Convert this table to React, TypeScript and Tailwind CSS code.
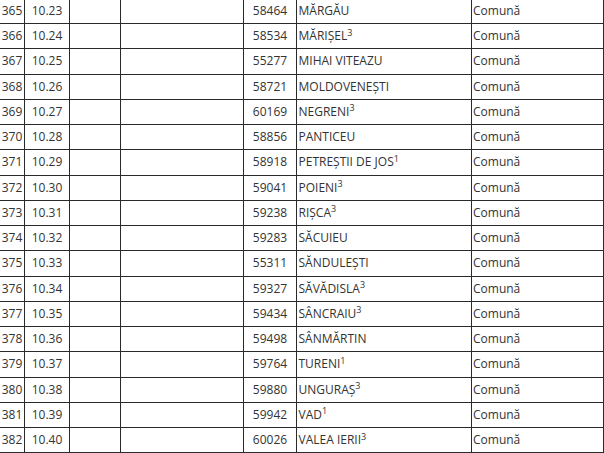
import React from "react";

type Row = [number, string, string, string, string?];

const rows: Row[] = [
  [365, "10.23", "58464", "MĂRGĂU"],
  [366, "10.24", "58534", "MĂRIȘEL", "3"],
  [367, "10.25", "55277", "MIHAI VITEAZU"],
  [368, "10.26", "58721", "MOLDOVENEȘTI"],
  [369, "10.27", "60169", "NEGRENI", "3"],
  [370, "10.28", "58856", "PANTICEU"],
  [371, "10.29", "58918", "PETREȘTII DE JOS", "1"],
  [372, "10.30", "59041", "POIENI", "3"],
  [373, "10.31", "59238", "RIȘCA", "3"],
  [374, "10.32", "59283", "SĂCUIEU"],
  [375, "10.33", "55311", "SĂNDULEȘTI"],
  [376, "10.34", "59327", "SĂVĂDISLA", "3"],
  [377, "10.35", "59434", "SÂNCRAIU", "3"],
  [378, "10.36", "59498", "SÂNMĂRTIN"],
  [379, "10.37", "59764", "TURENI", "1"],
  [380, "10.38", "59880", "UNGURAȘ", "3"],
  [381, "10.39", "59942", "VAD", "1"],
  [382, "10.40", "60026", "VALEA IERII", "3"],
];

const cell = "border-r border-b border-[#2a2a2a] flex items-center h-full";

export default function App() {
  return (
    <div
      className="w-[604px] h-[453px] overflow-hidden bg-white text-[#333333] text-[12px]"
      style={{ fontFamily: '"Open Sans", "Noto Sans", sans-serif' }}
    >
      <div className="mt-[-1.25px]">
        {rows.map(([n, sec, code, name, sup]) => (
          <div
            key={n}
            className="grid grid-cols-[25px_45px_51px_123px_53px_175px_132px] h-[25.25px]"
          >
            <div className={`${cell} justify-center`}>{n}</div>
            <div className={`${cell} justify-center`}>{sec}</div>
            <div className={cell}></div>
            <div className={cell}></div>
            <div className={`${cell} justify-center`}>{code}</div>
            <div className={`${cell} pl-[1.5px]`}>
              <span>
                {name}
                {sup && <sup>{sup}</sup>}
              </span>
            </div>
            <div className={`${cell} pl-[1px]`}>Comună</div>
          </div>
        ))}
      </div>
    </div>
  );
}
